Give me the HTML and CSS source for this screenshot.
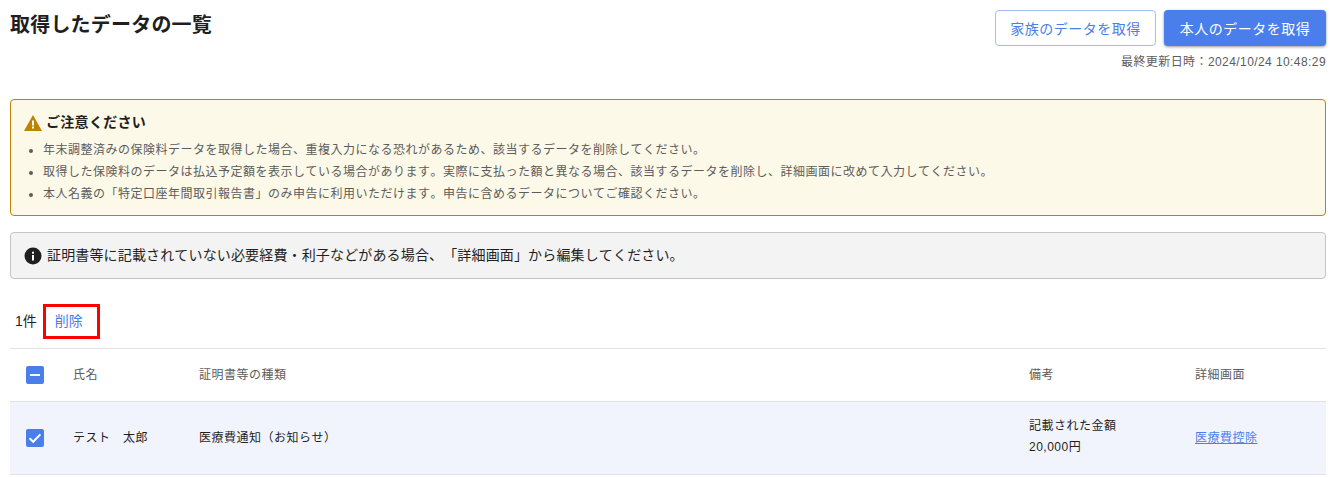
FILE: index.html
```html
<!DOCTYPE html>
<html lang="ja">
<head>
<meta charset="utf-8">
<title>取得したデータの一覧</title>
<link rel="stylesheet" href="styles.css">
</head>
<body>
<main class="page">
  <header class="head">
    <h1 class="title">取得したデータの一覧</h1>
    <div class="head-side">
      <div class="actions">
        <button class="btn btn-outline">家族のデータを取得</button>
        <button class="btn btn-primary">本人のデータを取得</button>
      </div>
      <p class="updated">最終更新日時：2024/10/24 10:48:29</p>
    </div>
  </header>

  <section class="notice notice-warn">
    <h2 class="notice-title">
      <svg class="warn-icon" viewBox="0 0 18 16" width="18" height="16"><path fill="#bf8205" d="M9 0 18 16H0Z"/><rect x="8" y="5.5" width="2" height="5" fill="#fff"/><rect x="8" y="11.5" width="2" height="2" fill="#fff"/></svg>
      ご注意ください
    </h2>
    <ul class="notice-list">
      <li>年末調整済みの保険料データを取得した場合、重複入力になる恐れがあるため、該当するデータを削除してください。</li>
      <li>取得した保険料のデータは払込予定額を表示している場合があります。実際に支払った額と異なる場合、該当するデータを削除し、詳細画面に改めて入力してください。</li>
      <li>本人名義の「特定口座年間取引報告書」のみ申告に利用いただけます。申告に含めるデータについてご確認ください。</li>
    </ul>
  </section>

  <section class="notice notice-info">
    <svg class="info-icon" viewBox="0 0 18 18" width="18" height="18"><circle cx="9" cy="9" r="8.5" fill="#1f1f1f"/><rect x="8" y="8" width="2" height="5.5" fill="#fff"/><rect x="8" y="4.7" width="2" height="2" fill="#fff"/></svg>
    <span>証明書等に記載されていない必要経費・利子などがある場合、「詳細画面」から編集してください。</span>
  </section>

  <div class="toolbar">
    <span class="count">1件</span>
    <a class="delete" href="#">削除</a>
  </div>

  <table class="table">
    <colgroup>
      <col class="c-check"><col class="c-name"><col class="c-type"><col class="c-note"><col class="c-link">
    </colgroup>
    <thead>
      <tr>
        <th><span class="check"><svg viewBox="0 0 18 18" width="18" height="18"><rect x="4" y="8" width="10" height="2" fill="#fff"/></svg></span></th>
        <th>氏名</th>
        <th>証明書等の種類</th>
        <th>備考</th>
        <th>詳細画面</th>
      </tr>
    </thead>
    <tbody>
      <tr>
        <td><span class="check"><svg viewBox="0 0 18 18" width="18" height="18"><path d="M3.6 9.2 7.2 12.8 14.4 5.4" fill="none" stroke="#fff" stroke-width="2"/></svg></span></td>
        <td>テスト　太郎</td>
        <td>医療費通知（お知らせ）</td>
        <td class="note">記載された金額<br>20,000円</td>
        <td><a class="link" href="#">医療費控除</a></td>
      </tr>
    </tbody>
  </table>
</main>
</body>
</html>
```
FILE: styles.css
```css
* { box-sizing: border-box; }
html, body { margin: 0; height: 100%; overflow: hidden; }
body {
  background: #fff;
  color: #1f1f1f;
  font-family: "Liberation Sans", "Noto Sans CJK JP", sans-serif;
  font-size: 12px;
  letter-spacing: .5px;
  text-spacing-trim: space-all;
  font-kerning: none;
}
.page { padding: 10px 7px 0 10px; }
.head { display: flex; justify-content: space-between; align-items: flex-start; height: 89px; }
.title { margin: 0; font-size: 20px; line-height: 30px; font-weight: 700; letter-spacing: .2px; }
.head-side { display: flex; flex-direction: column; align-items: flex-end; }
.actions { display: flex; gap: 8px; }
.btn {
  width: 162px; height: 36px; border-radius: 4px; font: inherit; font-size: 14px;
  letter-spacing: .5px; padding: 0; cursor: pointer;
}
.btn-outline { width: 161px; background: #fff; color: #4a7eea; border: 1px solid #a4bdf5; }
.btn-primary { background: #4a7eea; color: #fff; border: 0; box-shadow: 0 1px 3px rgba(0,0,0,.4); }
.updated { margin: 7px 0 0; color: #5c5c5c; line-height: 18px; letter-spacing: .42px; }
.notice { border-radius: 4px; }
.notice-warn { background: #fdf9e8; border: 1px solid #bf8205; height: 117px; padding: 12px 13px 0; }
.notice-title { display: flex; align-items: center; gap: 4px; margin: 0 0 6px; font-size: 14px; line-height: 21px; font-weight: 700; letter-spacing: .3px; color: #1f1f1f; }
.notice-list { margin: 0; padding: 0 0 0 19px; color: #5c5c5c; line-height: 22px; }
.notice-list li::marker { font-size: 12px; }
.notice-info {
  display: flex; align-items: center; gap: 5px; margin-top: 16px; height: 47px; padding: 0 13px;
  background: #f3f3f3; border: 1px solid #c4c4c4; font-size: 14px; letter-spacing: .15px;
}
.notice-info span { padding-bottom: 3px; }
.toolbar { display: flex; align-items: flex-end; height: 70px; padding-bottom: 9px; border-bottom: 1px solid #e2e2e2; }
.count { margin: 0 0 9px 5px; font-size: 14px; letter-spacing: 0; color: #1f1f1f; }
.delete {
  margin-left: 6px; width: 57px; height: 35px; line-height: 29px; text-align: left; padding-left: 9px;
  border: 3px solid #f00; color: #4a7eea; text-decoration: none; font-size: 14px; letter-spacing: 0;
}
.table { width: 100%; border-collapse: collapse; table-layout: fixed; }
.c-check { width: 63px; }
.c-name { width: 126px; }
.c-type { width: 830px; }
.c-note { width: 166px; }
.table th, .table td { text-align: left; padding: 0 0 2px; vertical-align: middle; }
.table th { height: 52px; font-weight: 400; color: #5c5c5c; border-bottom: 1px solid #e2e2e2; }
.table td { height: 73px; background: #f1f4fd; border-bottom: 1px solid #e2e2e2; }
.table th:first-child, .table td:first-child { padding: 0 0 0 16px; }
.check { display: block; width: 18px; height: 18px; background: #4a7eea; border-radius: 2px; }
.check svg { display: block; }
.note { line-height: 21px; }
.link { color: #4a7eea; }
```
